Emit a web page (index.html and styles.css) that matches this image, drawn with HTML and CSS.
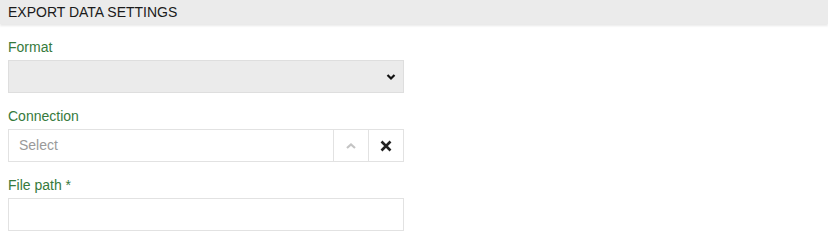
FILE: index.html
```html
<!DOCTYPE html>
<html>
<head>
<meta charset="utf-8">
<link rel="stylesheet" href="styles.css">
</head>
<body>
<div class="header">EXPORT DATA SETTINGS</div>
<div class="form">
  <div class="group">
    <div class="label">Format</div>
    <div class="select">
      <svg class="chev" width="10" height="8" viewBox="0 0 10 8"><path d="M1.5 2 L5 5.5 L8.5 2" fill="none" stroke="#111" stroke-width="2.2"/></svg>
    </div>
  </div>
  <div class="group">
    <div class="label">Connection</div>
    <div class="combo">
      <div class="placeholder">Select</div>
      <div class="btn"><svg width="12" height="8" viewBox="0 0 12 8"><path d="M2 6 L6 2.5 L10 6" fill="none" stroke="#c4c4c4" stroke-width="2.2"/></svg></div>
      <div class="btn"><svg width="12" height="12" viewBox="0 0 12 12"><path d="M1.5 1.5 L10.5 10.5 M10.5 1.5 L1.5 10.5" fill="none" stroke="#222" stroke-width="2.6"/></svg></div>
    </div>
  </div>
  <div class="group">
    <div class="label">File path *</div>
    <div class="input"></div>
  </div>
</div>
</body>
</html>
```
FILE: styles.css
```css
html, body { margin: 0; padding: 0; background: #fff; }
body { font-family: "Liberation Sans", Arial, sans-serif; font-size: 14px; color: #222; }
.header {
  height: 24px;
  line-height: 24px;
  padding-left: 8px;
  background: #ebebeb;
  color: #1a1a1a;
  font-size: 14px;
  box-shadow: 0 2px 2px rgba(0,0,0,0.09);
  position: relative;
}
.form { padding: 13px 8px 0 8px; width: 396px; }
.group { margin-bottom: 13px; }
.label { line-height: 20px; margin-bottom: 3px; color: #367a3c; }
.select {
  height: 31px;
  border: 1px solid #dedede;
  background: #ebebeb;
  display: flex;
  align-items: center;
  justify-content: flex-end;
  padding-right: 7px;
}
.chev { display: block; }
.combo {
  height: 31px;
  border: 1px solid #e2e2e2;
  display: flex;
}
.placeholder { flex: 1; padding-left: 10px; line-height: 31px; color: #9a9a9a; }
.btn {
  width: 34px;
  border-left: 1px solid #e2e2e2;
  display: flex;
  align-items: center;
  justify-content: center;
}
.input { height: 31px; border: 1px solid #e2e2e2; }
```
